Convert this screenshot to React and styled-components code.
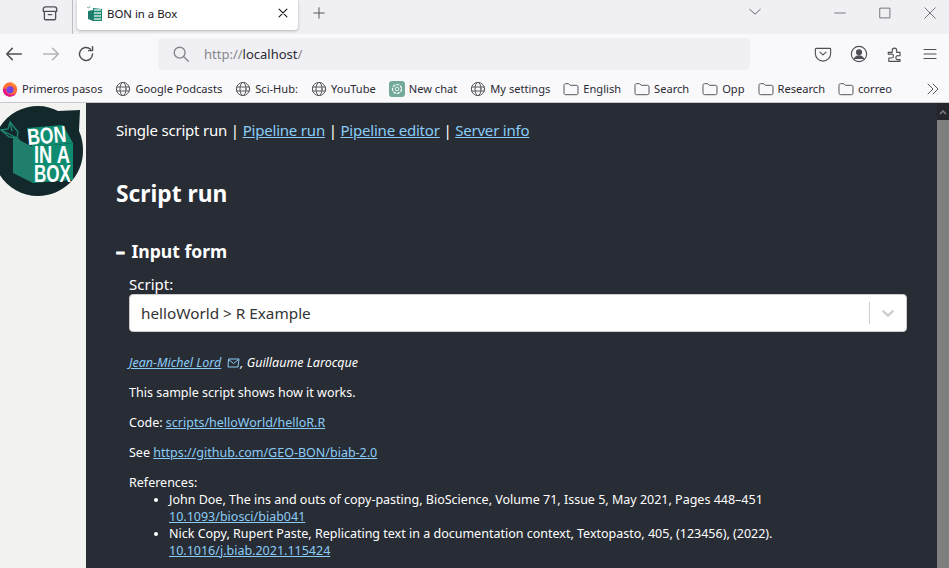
import React from 'react'
import styled, { createGlobalStyle } from 'styled-components'

const GlobalStyle = createGlobalStyle`
  html, body { margin: 0; padding: 0; height: 100%; overflow: hidden; }
  body { font-family: "Noto Sans", "Open Sans", sans-serif; }
`

const Window = styled.div`
  width: 949px;
  height: 568px;
  display: flex;
  flex-direction: column;
  overflow: hidden;
`

/* browser chrome */
const TabBar = styled.div`
  height: 34px;
  flex: none;
  background: #f0f0f4;
  display: flex;
  align-items: flex-start;
  color: #4f4f56;
`
const TabsButton = styled.div`
  width: 72px;
  height: 26px;
  border-right: 1px solid #bdbdc2;
  padding-bottom: 8px;
  display: flex;
  align-items: center;
  svg { margin-left: 41px; }
`
const Tab = styled.div`
  width: 221px;
  height: 30px;
  margin-left: 4px;
  background: #fff;
  border-radius: 0 0 4px 4px;
  box-shadow: 0 1px 3px rgba(0, 0, 0, 0.25);
  display: flex;
  align-items: center;
  padding: 0 8px 4px 9px;
  box-sizing: border-box;
  font-size: 11.4px;
  color: #15141a;
`
const TabTitle = styled.span`
  flex: 1;
  margin-left: 3px;
`
const NewTab = styled.div`
  margin: 6px 0 0 14px;
  display: flex;
`
const TabBarRight = styled.div`
  margin-left: auto;
  margin-right: -3px;
  display: flex;
  align-items: center;
  height: 25px;
`
const ListAll = styled.div`
  margin-right: 55px;
  display: flex;
  margin-top: -2px;
`
const WindowButton = styled.div`
  width: 45px;
  display: flex;
  justify-content: center;
`
const Toolbar = styled.div`
  height: 40px;
  flex: none;
  background: #f9f9fb;
  display: flex;
  align-items: center;
  color: #4f4f56;
`
const NavButtons = styled.div`
  width: 158px;
  display: flex;
  align-items: center;
  gap: 19px;
  padding-left: 5px;
  box-sizing: border-box;
`
const UrlBar = styled.div`
  width: 592px;
  height: 32px;
  background: #f0f0f4;
  border-radius: 4px;
  display: flex;
  align-items: center;
  font-size: 13px;
  color: #85858b;
  padding-left: 14px;
  box-sizing: border-box;
  gap: 14px;
  strong { font-weight: 400; color: #2b2a33; }
`
const ToolIcons = styled.div`
  margin-left: auto;
  display: flex;
  align-items: center;
  gap: 18px;
  padding-right: 11px;
`
const Bookmarks = styled.div`
  height: 27px;
  padding-top: 1px;
  flex: none;
  background: #f9f9fb;
  border-bottom: 1px solid #c8c8cc;
  display: flex;
  align-items: center;
  padding-left: 2px;
  font-size: 11.1px;
  color: #15141a;
`
const Mark = styled.div`
  display: flex;
  align-items: center;
  gap: 4px;
  margin-right: 13px;
  white-space: nowrap;
  color: #2b2a33;
  svg { color: #56565c; flex: none; }
`
const More = styled.div`
  margin-left: auto;
  margin-right: 8px;
  display: flex;
  color: #56565c;
`

/* page */
const Page = styled.div`
  flex: 1;
  min-height: 0;
  display: flex;
`
const Side = styled.aside`
  width: 86px;
  flex: none;
  background: #f2f2f0;
`
const Logo = styled.svg`
  display: block;
`
const Main = styled.main`
  flex: 1;
  min-width: 0;
  background: #282c34;
  color: #fff;
  padding: 16px 30px 0;
  overflow: hidden;
  font-size: 15px;
  line-height: 22px;
`
const Nav = styled.nav`
  height: 22px;
  white-space: nowrap;
  letter-spacing: -0.2px;
`
const Link = styled.a`
  color: #8accf7;
  text-decoration: underline;
`
const Heading = styled.h2`
  margin: 36px 0 0;
  font-size: 22.8px;
  line-height: 33px;
  font-weight: 700;
`
const FoldTitle = styled.h3`
  margin: 28px 0 0;
  font-size: 17.6px;
  line-height: 26px;
  font-weight: 700;
`
const FoldMark = styled.span`
  -webkit-text-stroke: 1px #fff;
  margin-right: 2px;
`
const Form = styled.div`
  margin: 9px 0 0 13px;
`
const Label = styled.div`
  height: 22px;
  line-height: 22px;
`
const Select = styled.div`
  height: 38px;
  background: #fff;
  border: 1px solid #ccc;
  border-radius: 4px;
  box-sizing: border-box;
  display: flex;
  align-items: center;
  color: #333;
  margin-top: -1px;
  padding-left: 11px;
  font-size: 15.3px;
`
const SelectValue = styled.span`
  flex: 1;
`
const SelectDivider = styled.span`
  width: 1px;
  height: 22px;
  background: #ccc;
`
const SelectArrow = styled.span`
  width: 36px;
  display: flex;
  justify-content: center;
  color: #ccc;
`
const Doc = styled.div`
  margin-top: 22px;
  font-size: 12.5px;
  line-height: 17px;
`
const Para = styled.p`
  margin: 0 0 13px;
  font-style: ${(p) => (p.$italic ? 'italic' : 'normal')};
  svg { vertical-align: -2px; margin-left: 6px; }
`
const Refs = styled.ul`
  margin: 0;
  padding-left: 40px;
`

const ScrollTrack = styled.div`
  width: 12px;
  flex: none;
  background: #23262c;
  display: flex;
  flex-direction: column;
`
const ScrollUp = styled.div`
  height: 17px;
  display: flex;
  align-items: center;
  justify-content: center;
`
const ScrollThumb = styled.div`
  flex: 1;
  background: #7f7f7f;
`

const Icon = ({ size = 16, sw = 1.2, children, ...rest }) => (
  <svg width={size} height={size} viewBox="0 0 16 16" fill="none" stroke="currentColor" strokeWidth={sw} strokeLinecap="round" strokeLinejoin="round" {...rest}>
    {children}
  </svg>
)

const Globe = () => (
  <Icon sw={1}>
    <circle cx="8" cy="8" r="6.6" />
    <ellipse cx="8" cy="8" rx="3" ry="6.6" />
    <path d="M1.6 6h12.800M1.600 10h12.800" />
  </Icon>
)

const Folder = () => (
  <Icon sw={1}>
    <path d="M1 4.200c0-.9.600-1.500 1.400-1.500h3.200l1.600 1.600h6.400c.8 0 1.400.6 1.400 1.400v6.600c0 .8-.6 1.400-1.400 1.400H2.400c-.8 0-1.400-.6-1.400-1.400z" />
  </Icon>
)

const Firefox = () => (
  <svg width="16" height="16" viewBox="0 0 16 16">
    <circle cx="8" cy="8.500" r="7.200" fill="#ff7139" />
    <path d="M9 .8c3.500 1 6.300 4.200 6.200 7.700-.3-2.500-2-4.700-4.200-5.700.5.800.8 1.500.8 2.400C11 3.800 9.800 2.500 9 .8z" fill="#ffbd4f" />
    <circle cx="8" cy="8.800" r="3.600" fill="#7542e5" />
    <path d="M1 8c-.3 4.300 3 7.700 7 7.700 3 0 5.700-1.900 6.600-4.700-1.500 2.200-4 3.100-6.600 2.400C5.500 12.800 3.500 11 3.600 7.500 2.500 7.300 1.500 7.500 1 8z" fill="#e31587" />
  </svg>
)

const ChatLogo = () => (
  <svg width="16" height="16" viewBox="0 0 16 16">
    <rect width="16" height="16" rx="3" fill="#74aa9c" />
    <circle cx="8" cy="8" r="4.500" fill="none" stroke="#fff" strokeWidth="1.200" strokeDasharray="3 1" />
    <circle cx="8" cy="8" r="1.800" fill="none" stroke="#fff" strokeWidth="0.800" />
  </svg>
)

const Favicon = () => (
  <svg width="18" height="18" viewBox="0 0 18 18">
    <path d="M1 3l2 1 1-2" fill="none" stroke="#5d9e8f" strokeWidth="0.800" />
    <path d="M2 7l5-1v11l-5-2z" fill="#1f7b6b" />
    <path d="M7 4l9 1v12l-9 0z" fill="#16896f" />
    <path d="M8 6h7M8 9h7M8 12h7M8 15h7" stroke="#cfe6df" strokeWidth="1.300" />
  </svg>
)

const LogoMark = () => (
  <Logo width="86" height="96" viewBox="0 0 86 96">
    <path d="M-7 48C-7 22 14 3 38 3c8 0 14 2 20 5l22-1-1 21c3 6 4 13 4 20 0 25-20 45-45 45S-7 73-7 48z" fill="#12282a" />
    <g fill="none" stroke="#1f8a72" strokeWidth="1.300">
      <path d="M1 27l7-1 2-7 8 10-1 6-8-1z" />
      <path d="M10 19l2 9M1 27l16 8" />
      <path d="M17 35l9 9" />
    </g>
    <path d="M13 34l20 10v36L13 70z" fill="#1f7f6c" />
    <path d="M27 25l36-3 10 18-41 4z" fill="#0f8c70" />
    <path d="M32 44l41-4v37l-40 3z" fill="#0f8c70" />
    <g fontFamily="'Liberation Sans Narrow','Liberation Sans',sans-serif" fontWeight="700" fill="#fff" fontSize="23">
      <text x="28" y="42" transform="rotate(-5 28 42)" textLength="39" lengthAdjust="spacingAndGlyphs">BON</text>
      <text x="34" y="60" textLength="36" lengthAdjust="spacingAndGlyphs">IN A</text>
      <text x="34" y="79" textLength="37" lengthAdjust="spacingAndGlyphs">BOX</text>
    </g>
  </Logo>
)

const marks = [
  { label: 'Primeros pasos', icon: <Firefox /> },
  { label: 'Google Podcasts', icon: <Globe /> },
  { label: 'Sci-Hub:', icon: <Globe /> },
  { label: 'YouTube', icon: <Globe /> },
  { label: 'New chat', icon: <ChatLogo /> },
  { label: 'My settings', icon: <Globe /> },
  { label: 'English', icon: <Folder /> },
  { label: 'Search', icon: <Folder /> },
  { label: 'Opp', icon: <Folder /> },
  { label: 'Research', icon: <Folder /> },
  { label: 'correo', icon: <Folder /> },
]

export default function App() {
  return (
    <Window>
      <GlobalStyle />
      <TabBar>
        <TabsButton>
          <Icon size={18} sw={1.2}>
            <path d="M3 6.500h10v6.500a1 1 0 0 1-1 1H4a1 1 0 0 1-1-1zM2 5c0-1.300.700-2.500 2-2.500h8c1.300 0 2 1.200 2 2.500v1.500H2zM6.500 9.500h3" />
          </Icon>
        </TabsButton>
        <Tab>
          <Favicon />
          <TabTitle>BON in a Box</TabTitle>
          <Icon size={14} sw={1.2}><path d="M3.500 3.500l9 9M12.500 3.500l-9 9" /></Icon>
        </Tab>
        <NewTab>
          <Icon size={14} sw={1.1}><path d="M8 2v12M2 8h12" /></Icon>
        </NewTab>
        <TabBarRight>
          <ListAll>
            <Icon size={14} sw={1}><path d="M2 5l6 5.500L14 5" /></Icon>
          </ListAll>
          <WindowButton>
            <Icon size={12} sw={1}><path d="M1 8h14" /></Icon>
          </WindowButton>
          <WindowButton>
            <Icon size={12} sw={1}><path d="M1.500 1.500h13v13h-13z" strokeLinejoin="miter" /></Icon>
          </WindowButton>
          <WindowButton>
            <Icon size={12} sw={1}><path d="M1 1l14 14M15 1L1 15" /></Icon>
          </WindowButton>
        </TabBarRight>
      </TabBar>

      <Toolbar>
        <NavButtons>
          <Icon size={18} sw={1.3}><path d="M14.500 8h-13M6.500 3L1.500 8l5 5" /></Icon>
          <Icon size={18} sw={1.3} style={{ color: '#b4b4b8' }}><path d="M1.500 8h13M9.500 3l5 5-5 5" /></Icon>
          <Icon size={18} sw={1.3} style={{ marginLeft: -2 }}><path d="M13.800 8A5.800 5.800 0 1 1 12 3.800M13.800 1.500v3.500h-3.500" /></Icon>
        </NavButtons>
        <UrlBar>
          <Icon size={18} sw={1.2}><path d="M6.800 2a4.800 4.800 0 1 1 0 9.600 4.800 4.800 0 0 1 0-9.600zM10.300 10.300L14.500 14.500" /></Icon>
          <span>http://<strong>localhost</strong>/</span>
        </UrlBar>
        <ToolIcons>
          <Icon size={18} sw={1}><path d="M2 3h12a.8.8 0 0 1 .8.8V7.500a6.800 6.800 0 0 1-13.600 0V3.800A.8.8 0 0 1 2 3zM5.300 6.300L8 8.800l2.700-2.500" /></Icon>
          <Icon size={18} sw={1}>
            <circle cx="8" cy="8" r="6.800" />
            <circle cx="8" cy="6.500" r="2.200" fill="currentColor" />
            <path d="M3.800 12.500c.8-2 2.400-2.800 4.200-2.800s3.400.8 4.200 2.800" fill="currentColor" />
          </Icon>
          <Icon size={18} sw={1}><path d="M2 6.500h3.500V4.800a2 2 0 1 1 4 0V6.500h3v3H11a1.800 1.800 0 1 0 0 3.500h1.500v1.500H2.500v-3H5a1.700 1.700 0 0 0 0-3.400H2z" /></Icon>
          <Icon size={16} sw={1}><path d="M2 3.500h12M2 8h12M2 12.500h12" /></Icon>
        </ToolIcons>
      </Toolbar>

      <Bookmarks>
        {marks.map((m) => (
          <Mark key={m.label}>{m.icon}{m.label}</Mark>
        ))}
        <More>
          <Icon size={16} sw={1}><path d="M3 3l5 5-5 5M8 3l5 5-5 5" /></Icon>
        </More>
      </Bookmarks>

      <Page>
        <Side><LogoMark /></Side>
        <Main>
          <Nav>
            Single script run | <Link>Pipeline run</Link> | <Link>Pipeline editor</Link> | <Link>Server info</Link>
          </Nav>
          <Heading>Script run</Heading>
          <FoldTitle><FoldMark>–</FoldMark> Input form</FoldTitle>
          <Form>
            <Label>Script:</Label>
            <Select>
              <SelectValue>helloWorld &gt; R Example</SelectValue>
              <SelectDivider />
              <SelectArrow>
                <svg width="20" height="20" viewBox="0 0 20 20" fill="currentColor">
                  <path d="M4.500 7.400c.5-.5 1.200-.5 1.600 0L10 11.100l3.900-3.700c.4-.5 1.100-.5 1.600 0 .4.400.4 1.200 0 1.600l-4.700 4.500c-.4.400-1.200.4-1.600 0L4.500 9c-.4-.4-.4-1.200 0-1.600z" />
                </svg>
              </SelectArrow>
            </Select>
            <Doc>
              <Para $italic>
                <Link>Jean-Michel Lord</Link>
                <svg width="13" height="12" viewBox="0 0 13 12" fill="none" stroke="#8accf7" strokeWidth="1">
                  <path d="M1.500 2h10.500l-1 8H1z" />
                  <path d="M1.500 2.500l5 4 5-4" />
                </svg>
                , Guillaume Larocque
              </Para>
              <Para>This sample script shows how it works.</Para>
              <Para>Code: <Link>scripts/helloWorld/helloR.R</Link></Para>
              <Para>See <Link>https://github.com/GEO-BON/biab-2.0</Link></Para>
              <div>References:</div>
              <Refs>
                <li>
                  John Doe, The ins and outs of copy-pasting, BioScience, Volume 71, Issue 5, May 2021, Pages 448–451
                  <br />
                  <Link>10.1093/biosci/biab041</Link>
                </li>
                <li>
                  Nick Copy, Rupert Paste, Replicating text in a documentation context, Textopasto, 405, (123456), (2022).
                  <br />
                  <Link>10.1016/j.biab.2021.115424</Link>
                </li>
              </Refs>
            </Doc>
          </Form>
        </Main>
        <ScrollTrack>
          <ScrollUp>
            <svg width="8" height="6" viewBox="0 0 8 6" fill="none" stroke="#7f7f7f" strokeWidth="1.500"><path d="M1 5l3-3 3 3" /></svg>
          </ScrollUp>
          <ScrollThumb />
        </ScrollTrack>
      </Page>
    </Window>
  )
}
